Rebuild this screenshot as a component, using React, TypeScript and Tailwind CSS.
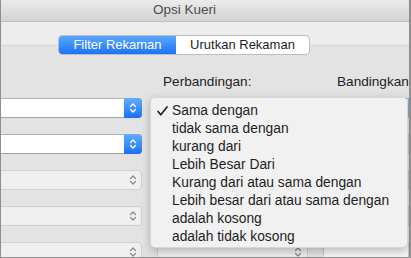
import React from "react";

const items = [
  "Sama dengan",
  "tidak sama dengan",
  "kurang dari",
  "Lebih Besar Dari",
  "Kurang dari atau sama dengan",
  "Lebih besar dari atau sama dengan",
  "adalah kosong",
  "adalah tidak kosong",
];

function Chevrons({ light }: { light?: boolean }) {
  return (
    <svg width="8" height="12" viewBox="0 0 8 12" fill="none">
      <path
        d="M1.5 4.5 L4 2 L6.5 4.5 M1.5 7.5 L4 10 L6.5 7.5"
        stroke={light ? "#ffffff" : "#8a8a8a"}
        strokeWidth="1.3"
        strokeLinecap="round"
        strokeLinejoin="round"
      />
    </svg>
  );
}

function Select({ active, className }: { active?: boolean; className?: string }) {
  return (
    <div
      className={`flex h-[20px] rounded-[4px] border ${
        active
          ? "border-[#b3b3b3] border-b-[#a0a0a0] bg-white"
          : "border-[#d0d0d0] bg-[#efefef]"
      } ${className ?? ""}`}
    >
      <div className="flex-1" />
      {active ? (
        <div className="-my-px -mr-px flex w-[18px] items-center justify-center rounded-r-[4px] bg-gradient-to-b from-[#62adfd] to-[#1a6ef4]">
          <Chevrons light />
        </div>
      ) : (
        <div className="flex w-[17px] items-center justify-center">
          <Chevrons />
        </div>
      )}
    </div>
  );
}

function Field({ focused }: { focused?: boolean }) {
  return (
    <div
      className={`h-[20px] border bg-[#f7f7f7] ${
        focused ? "border-[#7fb0ee]" : "border-[#c8c8c8]"
      }`}
    />
  );
}

export default function App() {
  const rows = [0, 1, 2, 3, 4];
  return (
    <div className="relative h-[258px] w-[411px] overflow-hidden border-b border-l border-r-2 border-[#8e8e8e] bg-[#e3e3e3] font-['Liberation_Sans',Arial,sans-serif] text-[13px] text-[#1e1e1e]">
      <div className="flex h-[22px] items-center border-b border-[#bdbdbd] bg-gradient-to-b from-[#ebebeb] to-[#d3d3d3] pl-[152px] text-[13.5px] text-[#4b4b4b]">
        Opsi Kueri
      </div>
      <div className="h-[24px] border-b border-[#d6d6d6] bg-[#ececec] pl-[57px] pt-[13px]">
        <div className="relative z-10 flex h-[20px] w-[252px] overflow-hidden rounded-[4px] border border-[#bdbdbd] bg-white">
          <div className="flex w-[117px] items-center justify-center bg-gradient-to-b from-[#5aa7fd] to-[#1b72f5] text-white">
            Filter Rekaman
          </div>
          <div className="flex flex-1 items-center justify-center">Urutkan Rekaman</div>
        </div>
      </div>

      <div className="mt-[28px] flex h-[16px] text-[13.6px] leading-[16px]">
        <div className="w-[162px]" />
        <div className="w-[174px]">Perbandingan:</div>
        <div>Bandingkan</div>
      </div>

      <div className="mt-[8px] flex flex-col gap-[16px]">
        {rows.map((r) => (
          <div key={r} className="flex">
            <Select active={r < 2} className="-ml-[10px] w-[158px]" />
            <div className="w-[15px]" />
            <Select className="w-[158px]" />
            <div className="w-[16px]" />
            <div className="w-[90px]">
              <Field focused={r === 0} />
            </div>
          </div>
        ))}
      </div>

      <div className="absolute left-[149px] top-[97px] h-[151px] w-[258px] rounded-[5px] border border-[#d6d6d6] bg-[#f1f1f1] pt-[4px] text-[13.8px] shadow-[0_3px_10px_rgba(0,0,0,0.25)]">
        {items.map((t, i) => (
          <div key={t} className="flex h-[18px] items-center leading-[18px]">
            <div className="flex w-[21px] items-center pl-[6px]">
              {i === 0 && (
                <svg width="11" height="10" viewBox="0 0 11 10" fill="none">
                  <path
                    d="M1 5.5 L3.8 8.8 L10 1"
                    stroke="#222"
                    strokeWidth="1.7"
                    strokeLinecap="round"
                    strokeLinejoin="round"
                  />
                </svg>
              )}
            </div>
            <div>{t}</div>
          </div>
        ))}
      </div>
    </div>
  );
}
